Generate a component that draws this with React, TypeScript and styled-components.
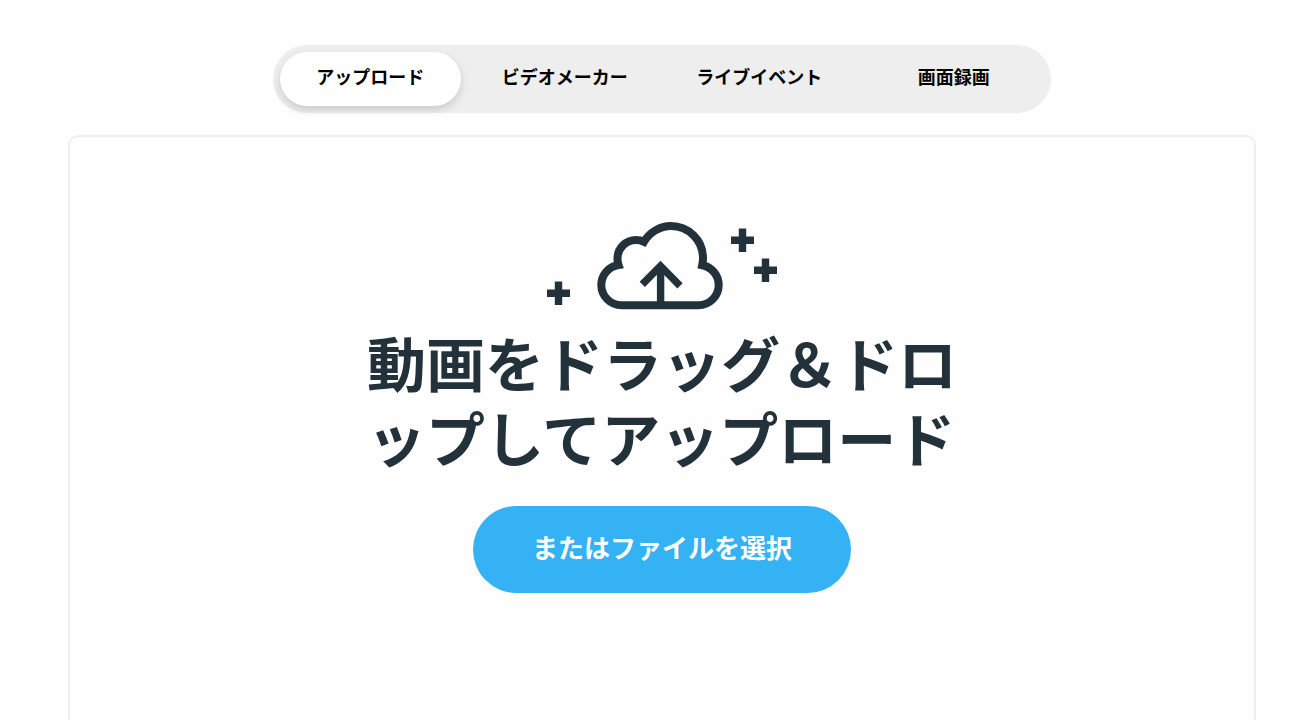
import React, { useRef, useState } from "react";
import styled, { createGlobalStyle } from "styled-components";

const GlobalStyle = createGlobalStyle`
  *, *::before, *::after { box-sizing: border-box; }
  body {
    margin: 0;
    background: #fefefe;
    color: #000;
    font-family: "Noto Sans CJK JP", "Noto Sans", sans-serif;
  }
`;

const Page = styled.main`
  display: flex;
  flex-direction: column;
  gap: 22px;
  min-height: 100vh;
  padding: 45px 35px 0 68px;
`;

const TabBar = styled.div`
  display: grid;
  grid-template-columns: repeat(4, 1fr);
  width: 100%;
  max-width: 778px;
  margin: 0 auto;
  padding: 7px 0;
  border-radius: 34px;
  background: #eee;
`;

const Tab = styled.button<{ $active: boolean }>`
  height: 54px;
  margin: 0 7px;
  padding: 0 8px 6px;
  border: 0;
  border-radius: 27px;
  background: ${(p) => (p.$active ? "#fff" : "transparent")};
  box-shadow: ${(p) => (p.$active ? "0 4px 8px rgba(0, 0, 0, 0.15)" : "none")};
  color: #000;
  font: inherit;
  font-size: 18px;
  font-weight: 700;
  line-height: 24px;
  white-space: nowrap;
  cursor: pointer;
`;

const DropPanel = styled.section`
  display: flex;
  flex: 1;
  flex-direction: column;
  align-items: center;
  padding: 85px 24px 40px;
  border: 2px solid #eee;
  border-bottom: 0;
  border-radius: 10px 10px 0 0;
`;

const UploadArt = styled.svg`
  display: block;
  width: 230px;
  height: 88px;
  fill: none;
  stroke: #22313a;
`;

const Title = styled.h1`
  width: 100%;
  max-width: 590px;
  margin: 14px 0 32px;
  color: #22313a;
  font-size: 59px;
  font-weight: 700;
  line-height: 75px;
  line-break: anywhere;
`;

const SelectButton = styled.button`
  height: 87px;
  padding: 0 59px 6px;
  border: 0;
  border-radius: 44px;
  background: #34b2f3;
  color: #fff;
  font: inherit;
  font-size: 26px;
  font-weight: 700;
  line-height: 36px;
  white-space: nowrap;
  cursor: pointer;
`;

const tabs = ["アップロード", "ビデオメーカー", "ライブイベント", "画面録画"];
const title = "動画をドラッグ\uFF06ドロップしてアップロード";

function CloudUpload() {
  return (
    <UploadArt viewBox="0 0 230 88" aria-hidden="true">
      <path
        strokeWidth="8"
        strokeMiterlimit="10"
        d="M74.5 83.2A20.2 20.2 0 0 1 54.3 63A20.2 20.2 0 0 1 71.5 43A18.5 18.5 0 0 1 70.5 36.5A18.5 18.5 0 0 1 89 18A18.5 18.5 0 0 1 97 19.8A32 32 0 0 1 124 4A32 32 0 0 1 156 36A32 32 0 0 1 155.2 43.2A20.2 20.2 0 0 1 171.7 63A20.2 20.2 0 0 1 151.5 83.2Z"
      />
      <path strokeWidth="7.4" d="M113.6 82V44M95.3 62.4L113.5 44L133 63.8" />
      <path
        strokeWidth="7.4"
        d="M0 71.3H23M11.5 59.5V83M184 18.3H207M195.5 6.5V30M207 48.3H230M218.5 36.5V60"
      />
    </UploadArt>
  );
}

export default function App() {
  const [active, setActive] = useState(0);
  const fileInput = useRef<HTMLInputElement>(null);

  return (
    <>
      <GlobalStyle />
      <Page lang="ja">
        <TabBar role="tablist">
          {tabs.map((label, i) => (
            <Tab
              key={label}
              type="button"
              role="tab"
              aria-selected={i === active}
              $active={i === active}
              onClick={() => setActive(i)}
            >
              {label}
            </Tab>
          ))}
        </TabBar>
        <DropPanel>
          <CloudUpload />
          <Title>{title}</Title>
          <SelectButton type="button" onClick={() => fileInput.current?.click()}>
            またはファイルを選択
          </SelectButton>
          <input ref={fileInput} type="file" accept="video/*" hidden />
        </DropPanel>
      </Page>
    </>
  );
}
